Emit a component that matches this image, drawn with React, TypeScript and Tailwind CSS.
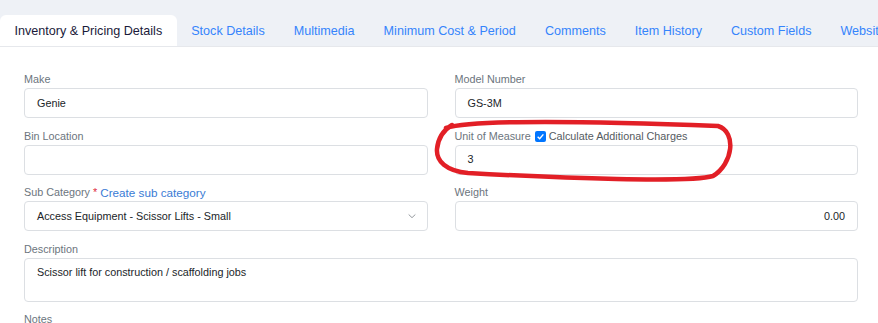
import React from "react";

const TABS = [
  "Inventory & Pricing Details",
  "Stock Details",
  "Multimedia",
  "Minimum Cost & Period",
  "Comments",
  "Item History",
  "Custom Fields",
  "Website",
];

const Label = ({ children }: { children: React.ReactNode }) => (
  <div className="flex h-[17px] items-center whitespace-nowrap text-[10.8px] text-[#6c757d]">{children}</div>
);

const Field = ({ value, right }: { value?: string; right?: boolean }) => (
  <div
    className={`flex h-[30px] items-center rounded-[4px] border border-[#dcdfe3] bg-white px-[12px] text-[10.8px] text-[#212529] ${
      right ? "justify-end" : ""
    }`}
  >
    {value}
  </div>
);

export default function App() {
  return (
    <div
      className="relative h-[323px] w-[878px] overflow-hidden bg-white"
      style={{ fontFamily: '"Liberation Sans", Arial, sans-serif' }}
    >
      {/* --- Tabs --- */}
      <div className="flex h-[47px] items-end overflow-hidden border-b border-[#e6e8ec] bg-[#eef1f6]">
        <ul className="flex whitespace-nowrap">
          {TABS.map((t, i) => (
            <li
              key={t}
              className={`flex h-[31px] items-center px-[14.5px] pt-[2px] text-[12.6px] ${
                i === 0 ? "rounded-t-[6px] bg-white text-[#1a1a3a]" : "text-[#3584fc]"
              }`}
            >
              {t}
            </li>
          ))}
        </ul>
      </div>

      {/* --- Form --- */}
      <div className="grid grid-cols-2 gap-x-[27px] pl-[24px] pr-[20px] pt-[24px]">
        <div className="mb-[9.5px]">
          <Label>Make</Label>
          <Field value="Genie" />
        </div>
        <div className="mb-[9.5px]">
          <Label>Model Number</Label>
          <Field value="GS-3M" />
        </div>

        <div className="mb-[9.5px]">
          <Label>Bin Location</Label>
          <Field />
        </div>
        <div className="mb-[9.5px]">
          <Label>
            Unit of Measure
            <span className="ml-[4px] mr-[3px] flex h-[11px] w-[11px] items-center justify-center rounded-[2px] bg-[#0075ff]">
              <svg viewBox="0 0 12 12" className="h-[9px] w-[9px]">
                <path d="M2.2 6.3 L4.9 8.9 L9.8 3.2" fill="none" stroke="white" strokeWidth="1.9" />
              </svg>
            </span>
            <span className="text-[#555b61]">Calculate Additional Charges</span>
          </Label>
          <Field value="3" />
        </div>

        <div className="mb-[9.5px]">
          <Label>
            Sub Category <span className="ml-[3px] text-[#e0283c]">*</span>
            <span className="ml-[3px] text-[11.7px] text-[#3a7bd5]">Create sub category</span>
          </Label>
          <div className="flex h-[30px] items-center justify-between rounded-[4px] border border-[#dcdfe3] bg-white pl-[12px] pr-[10px] text-[10.8px] text-[#212529]">
            Access Equipment - Scissor Lifts - Small
            <svg viewBox="0 0 12 12" className="h-[10px] w-[10px]">
              <path d="M2 4.2 L6 8 L10 4.2" fill="none" stroke="#8a8f95" strokeWidth="1.1" />
            </svg>
          </div>
        </div>
        <div className="mb-[9.5px]">
          <Label>Weight</Label>
          <Field value="0.00" right />
        </div>

        <div className="col-span-2 mb-[9px]">
          <Label>Description</Label>
          <div className="h-[44px] rounded-[4px] border border-[#dcdfe3] bg-white px-[12px] pt-[5px] text-[10.8px] text-[#212529]">
            Scissor lift for construction / scaffolding jobs
          </div>
        </div>

        <div className="col-span-2">
          <Label>Notes</Label>
        </div>
      </div>

      {/* --- hand-drawn annotation --- */}
      <svg className="pointer-events-none absolute left-0 top-0 h-[323px] w-[878px]" viewBox="0 0 878 323">
        <path
          d="M446 128 C468 121 560 120 718 126 C737 132 733 164 713 176 C690 183 560 178 468 173 C446 171 436 161 437 149 C438 139 442 131 452 125"
          fill="none"
          stroke="#e21f26"
          strokeWidth="4.5"
          strokeLinecap="round"
        />
      </svg>
    </div>
  );
}
